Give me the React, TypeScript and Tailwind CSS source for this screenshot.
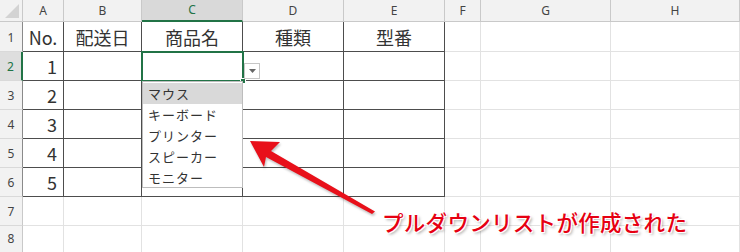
import React from "react";

const cols = ["A", "B", "C", "D", "E", "F", "G", "H"];
const headers = ["No.", "配送日", "商品名", "種類", "型番"];
const items = ["マウス", "キーボード", "プリンター", "スピーカー", "モニター"];

function Cell({ row, col }: { row: number; col: number }) {
  // table range A1:E6 gets dark borders
  const inTable = row >= 1 && row <= 6 && col <= 4;
  const border = inTable ? "border-[#4d4d4d]" : "border-[#e2e2e2]";
  let content: React.ReactNode = null;
  let align = "justify-center";
  if (row === 1 && col <= 4) {
    content = headers[col];
  } else if (col === 0 && row >= 2 && row <= 6) {
    content = row - 1;
    align = "justify-end pr-[6px]";
  }
  return (
    <div
      className={`flex items-center ${align} border-r border-b ${border} text-[18px] text-[#333] leading-none`}
    >
      {content}
    </div>
  );
}

export default function App() {
  return (
    <div className="relative w-[740px] h-[252px] overflow-hidden bg-white font-['Noto_Sans_CJK_JP',sans-serif]">
      <div className="grid grid-cols-[23px_41px_78px_101px_101px_101px_36px_130px_129px] grid-rows-[22px_30px_29px_29px_29px_29px_29px_29px_27px]">
        {/* corner */}
        <div className="relative bg-[#f2f2f2] border-r border-b border-[#c9c9c9]">
          <svg className="absolute right-[3px] bottom-[3px]" width="14" height="14" viewBox="0 0 14 14">
            <polygon points="14,0 14,14 0,14" fill="#d3d3d3" />
          </svg>
        </div>
        {cols.map((c) =>
          c === "C" ? (
            <div
              key={c}
              className="flex items-center justify-center bg-[#d9d9d9] border-r border-b-2 border-r-[#c9c9c9] border-b-[#217346] text-[12px] text-[#217346] font-['Noto_Sans',sans-serif]"
            >
              {c}
            </div>
          ) : (
            <div
              key={c}
              className="flex items-center justify-center bg-[#f2f2f2] border-r border-b border-[#c9c9c9] text-[12px] text-[#444] font-['Noto_Sans',sans-serif]"
            >
              {c}
            </div>
          )
        )}
        {[1, 2, 3, 4, 5, 6, 7, 8].map((r) => (
          <React.Fragment key={r}>
            <div
              className={`flex items-end justify-center pb-[4px] border-b border-b-[#d9d9d9] text-[12px] font-['Noto_Sans',sans-serif] ${
                r === 2
                  ? "bg-[#dedede] text-[#217346] border-r-2 border-r-[#217346]"
                  : r <= 6
                  ? "bg-[#f2f2f2] text-[#444] border-r border-r-[#8a8a8a]"
                  : "bg-[#f2f2f2] text-[#444] border-r border-r-[#c9c9c9]"
              }`}
            >
              {r}
            </div>
            {cols.map((c, i) => (
              <Cell key={c} row={r} col={i} />
            ))}
          </React.Fragment>
        ))}
      </div>

      {/* active cell C2 */}
      <div className="absolute left-[141px] top-[51px] w-[103px] h-[31px] border-2 border-[#217346]" />
      <div className="absolute left-[240px] top-[78px] w-[6px] h-[6px] bg-[#217346] border border-white" />

      {/* dropdown button */}
      <div className="absolute left-[244px] top-[63px] w-[16px] h-[16px] bg-white border border-[#c6c6c6] flex items-center justify-center">
        <svg width="7" height="4" viewBox="0 0 7 4">
          <polygon points="0,0 7,0 3.5,4" fill="#666" />
        </svg>
      </div>

      {/* dropdown list */}
      <div className="absolute left-[142px] top-[81px] w-[101px] h-[107px] bg-white border border-[#bdbdbd] pt-px">
        {items.map((t, i) => (
          <div
            key={t}
            className={`h-[21px] flex items-center pl-[5px] text-[13px] tracking-[1px] text-[#333] leading-none ${
              i === 0 ? "bg-[#d9d9d9]" : ""
            }`}
          >
            {t}
          </div>
        ))}
      </div>

      {/* arrow */}
      <svg className="absolute left-0 top-0 drop-shadow-[1px_2px_1px_rgba(0,0,0,0.25)]" width="740" height="252" viewBox="0 0 740 252">
        <polygon
          points="250,141 280,142 271,151 375,211.5 372,214 266,157 264,167"
          fill="#e8101a"
        />
      </svg>

      {/* label */}
      <div className="absolute left-[382px] top-[211px] text-[21.5px] leading-none font-medium text-[#e60012] tracking-[0.3px] [text-shadow:1px_1px_0_#fff,-1px_-1px_0_#fff,1px_-1px_0_#fff,-1px_1px_0_#fff,2px_2px_3px_rgba(0,0,0,0.35)]">
        プルダウンリストが作成された
      </div>
    </div>
  );
}
